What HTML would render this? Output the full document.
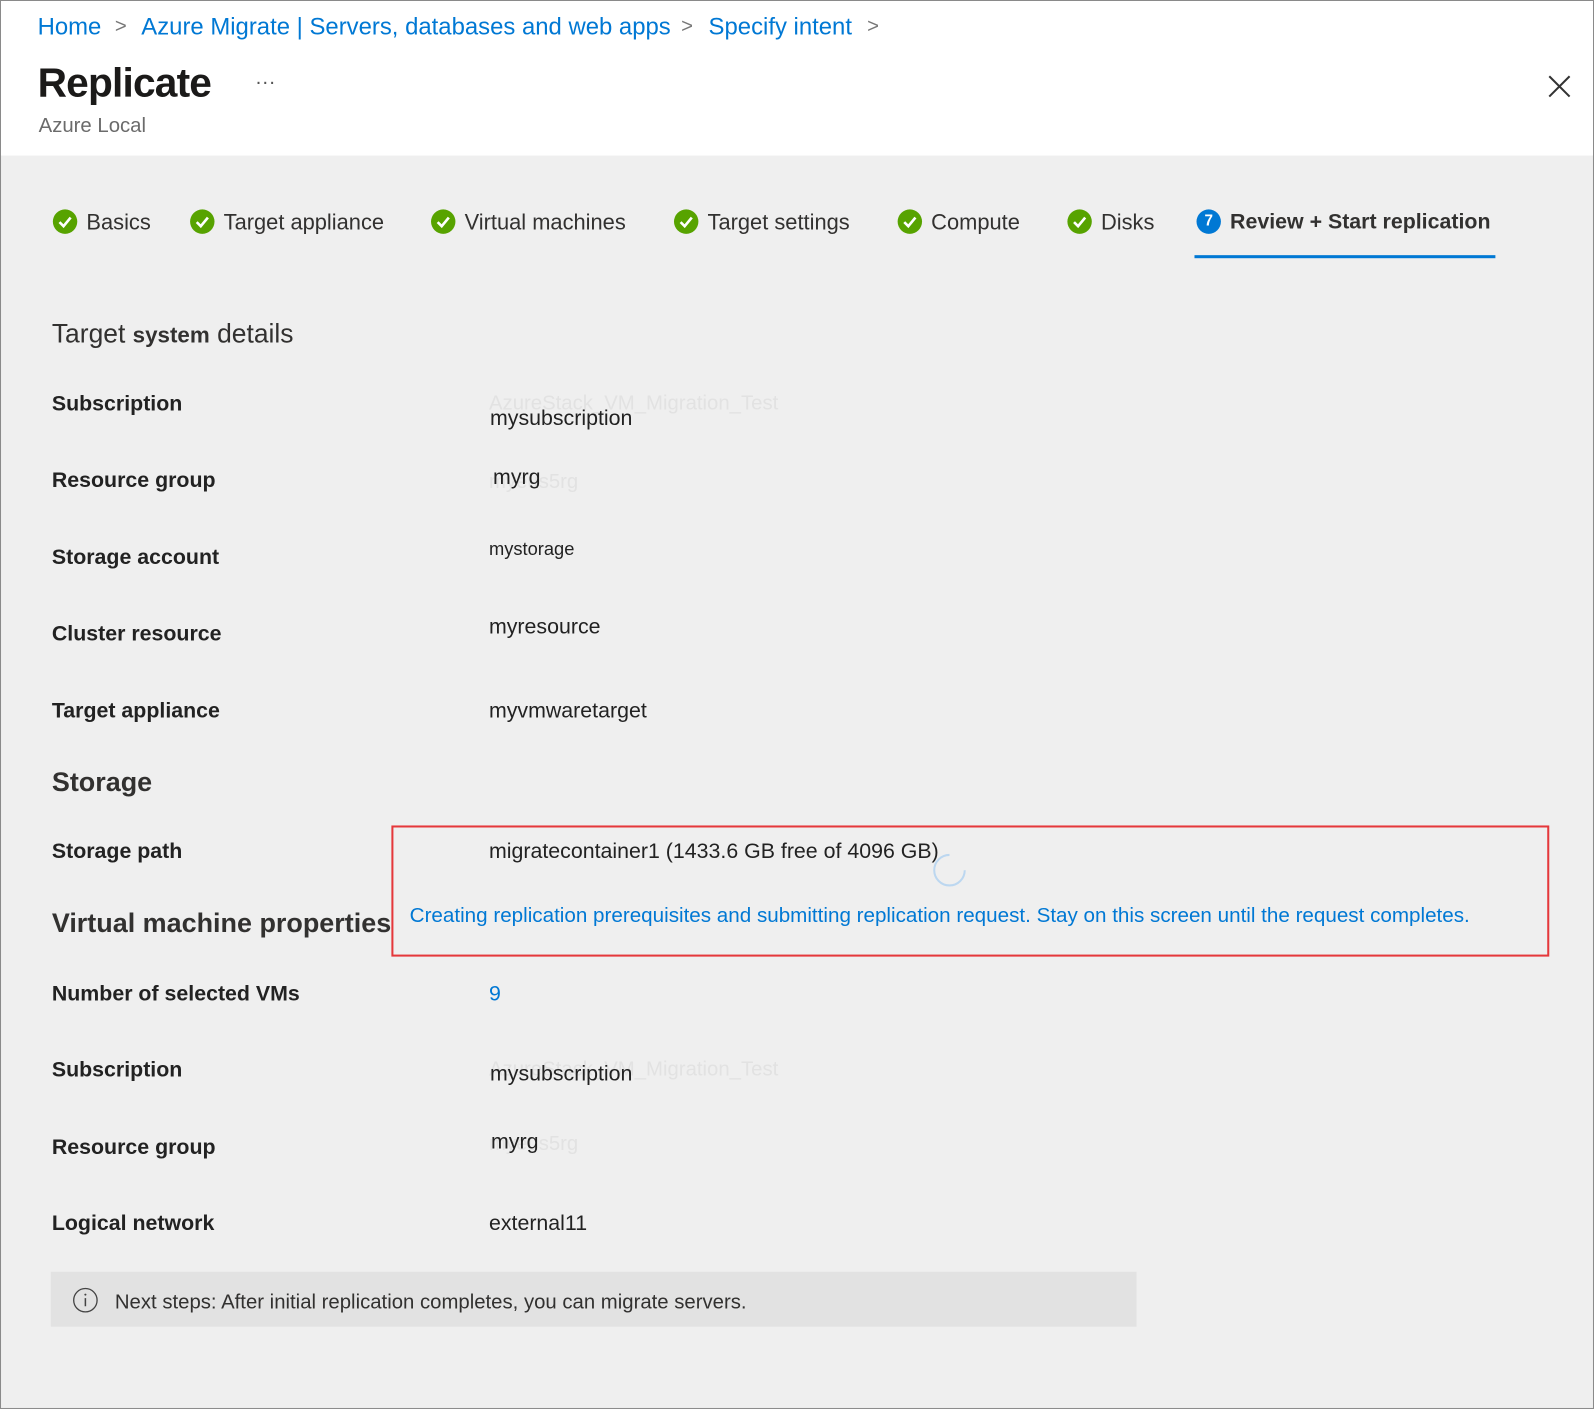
<!DOCTYPE html>
<html><head><meta charset="utf-8"><style>
html,body{margin:0;padding:0;width:1594px;height:1409px;overflow:hidden;background:#fff}
#w{position:absolute;left:0;top:0;width:1568px;height:1386px;transform:scale(1.01658);transform-origin:0 0;font-family:"Liberation Sans",sans-serif;}
.frame{position:absolute;left:0;top:0;width:1566px;height:1384px;border:1px solid #8a8a8a;background:#efefef}
.hdr{position:absolute;left:1px;top:1px;width:1566px;height:152px;background:#fff}
.t{position:absolute;white-space:nowrap}
.bc{color:#0078d4;font-size:23.5px;top:13px}
.chev{color:#777;font-size:20px;top:15px}
.tab{top:207px;font-size:21.5px;color:#323130}
.ck{position:absolute;top:206px;width:24px;height:24px;border-radius:50%;background:#57a300;}
.ck svg{position:absolute;left:0;top:0}
.h{font-size:26.5px;color:#323130;font-weight:bold}
.lab{font-size:21px;color:#222;font-weight:bold;left:51px}
.val{font-size:21px;color:#222;left:481px}
.ghost{color:#e2e2e2;font-size:20px}
</style></head><body><div id="w">
<div class="frame"></div>
<div class="hdr"></div>
<div class="t bc" style="left:37px">Home</div>
<div class="t chev" style="left:113px">&gt;</div>
<div class="t bc" style="left:139px">Azure Migrate | Servers, databases and web apps</div>
<div class="t chev" style="left:670px">&gt;</div>
<div class="t bc" style="left:697px">Specify intent</div>
<div class="t chev" style="left:853px">&gt;</div>
<div class="t" style="left:37px;top:60px;font-size:40px;color:#1b1a19;font-weight:bold;letter-spacing:-0.8px">Replicate</div>
<div class="t" style="left:251px;top:70px;font-size:20px;color:#555">···</div>
<div class="t" style="left:38px;top:113px;font-size:20px;color:#6b6b6b">Azure Local</div>
<svg style="position:absolute;left:1523px;top:74px" width="22" height="22"><path d="M1 1L21 21M21 1L1 21" stroke="#333" stroke-width="2"/></svg>

<div class="ck" style="left:52px"><svg width="24" height="24"><path d="M6.5 12.5l4 4 7-8.5" stroke="#fff" stroke-width="2.6" fill="none"/></svg></div>
<div class="t tab" style="left:85px">Basics</div>
<div class="ck" style="left:187px"><svg width="24" height="24"><path d="M6.5 12.5l4 4 7-8.5" stroke="#fff" stroke-width="2.6" fill="none"/></svg></div>
<div class="t tab" style="left:220px">Target appliance</div>
<div class="ck" style="left:424px"><svg width="24" height="24"><path d="M6.5 12.5l4 4 7-8.5" stroke="#fff" stroke-width="2.6" fill="none"/></svg></div>
<div class="t tab" style="left:457px">Virtual machines</div>
<div class="ck" style="left:663px"><svg width="24" height="24"><path d="M6.5 12.5l4 4 7-8.5" stroke="#fff" stroke-width="2.6" fill="none"/></svg></div>
<div class="t tab" style="left:696px">Target settings</div>
<div class="ck" style="left:883px"><svg width="24" height="24"><path d="M6.5 12.5l4 4 7-8.5" stroke="#fff" stroke-width="2.6" fill="none"/></svg></div>
<div class="t tab" style="left:916px">Compute</div>
<div class="ck" style="left:1050px"><svg width="24" height="24"><path d="M6.5 12.5l4 4 7-8.5" stroke="#fff" stroke-width="2.6" fill="none"/></svg></div>
<div class="t tab" style="left:1083px">Disks</div>
<div class="ck" style="left:1177px;background:#0078d4;color:#fff;font-size:15px;font-weight:bold;text-align:center;line-height:24px">7</div>
<div class="t tab" style="left:1210px;font-weight:bold;font-size:21px;top:207px">Review + Start replication</div>
<div style="position:absolute;left:1175px;top:251px;width:296px;height:3px;background:#0078d4"></div>

<div class="t" style="left:51px;top:313px;font-size:26px;color:#323130">Target <b style="font-size:22px">system</b> details</div>
<div class="t lab" style="top:386px">Subscription</div>
<div class="t ghost" style="left:481px;top:386px">AzureStack_VM_Migration_Test</div>
<div class="t val" style="left:482px;top:400px">mysubscription</div>
<div class="t lab" style="top:461px">Resource group</div>
<div class="t ghost" style="left:481px;top:463px">myeus5rg</div>
<div class="t val" style="left:485px;top:458px">myrg</div>
<div class="t lab" style="top:537px">Storage account</div>
<div class="t val" style="top:530px;font-size:18px">mystorage</div>
<div class="t lab" style="top:612px">Cluster resource</div>
<div class="t val" style="top:605px">myresource</div>
<div class="t lab" style="top:688px">Target appliance</div>
<div class="t val" style="top:688px">myvmwaretarget</div>

<div class="t h" style="left:51px;top:754px">Storage</div>
<div class="t lab" style="top:826px">Storage path</div>
<div class="t val" style="top:826px">migratecontainer1 (1433.6 GB free of 4096 GB)</div>
<div class="t h" style="left:51px;top:893px">Virtual machine properties</div>
<div style="position:absolute;left:385px;top:812px;width:1135px;height:125px;border:2px solid #e5383b"></div>
<svg style="position:absolute;left:916px;top:838px" width="36" height="36"><path d="M18 3A15 15 0 1 0 33 18" stroke="#bcd7f0" stroke-width="2" fill="none"/></svg>
<div class="t" style="left:403px;top:890px;font-size:20.3px;color:#0078d4">Creating replication prerequisites and submitting replication request. Stay on this screen until the request completes.</div>

<div class="t lab" style="top:966px">Number of selected VMs</div>
<div class="t val" style="top:966px;color:#0078d4">9</div>
<div class="t lab" style="top:1041px">Subscription</div>
<div class="t ghost" style="left:481px;top:1041px">AzureStack_VM_Migration_Test</div>
<div class="t val" style="left:482px;top:1045px">mysubscription</div>
<div class="t lab" style="top:1117px">Resource group</div>
<div class="t ghost" style="left:481px;top:1114px">myeus5rg</div>
<div class="t val" style="left:483px;top:1112px">myrg</div>
<div class="t lab" style="top:1192px">Logical network</div>
<div class="t val" style="top:1192px">external11</div>

<div style="position:absolute;left:50px;top:1251px;width:1068px;height:54px;background:#e2e2e2"></div>
<svg style="position:absolute;left:71px;top:1266px" width="26" height="26"><circle cx="13" cy="13" r="11.5" stroke="#444" stroke-width="1.3" fill="none"/><path d="M13 11v8" stroke="#444" stroke-width="1.5"/><circle cx="13" cy="7.5" r="1" fill="#444"/></svg>
<div class="t" style="left:113px;top:1270px;font-size:20px;color:#323130">Next steps: After initial replication completes, you can migrate servers.</div>
</div></body></html>
